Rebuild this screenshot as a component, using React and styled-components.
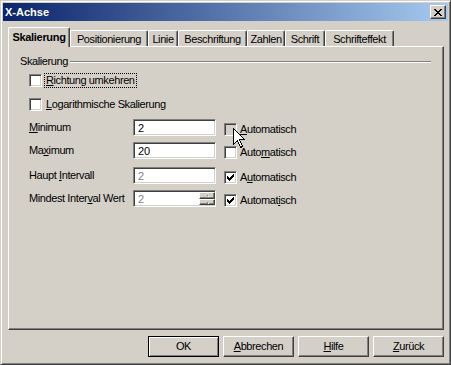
import React from 'react';
import styled, { createGlobalStyle, css } from 'styled-components';

const Global = createGlobalStyle`
  html, body { margin: 0; padding: 0; background: #d4d0c8; }
  body {
    font-family: "Liberation Sans", Arial, sans-serif;
    font-size: 11px;
    letter-spacing: -0.4px;
    color: #000;
  }
  u { text-decoration-thickness: 1px; text-underline-offset: 1px; }
`;

const raised = css`
  border-top: 1px solid #fff;
  border-left: 1px solid #fff;
  border-right: 1px solid #404040;
  border-bottom: 1px solid #404040;
  box-shadow: inset -1px -1px 0 #808080;
`;

const sunken = css`
  border-top: 1px solid #808080;
  border-left: 1px solid #808080;
  border-right: 1px solid #fff;
  border-bottom: 1px solid #fff;
  box-shadow: inset 1px 1px 0 #404040, inset -1px -1px 0 #d4d0c8;
`;

const Window = styled.div`
  position: relative;
  width: 451px;
  height: 365px;
  box-sizing: border-box;
  background: #d4d0c8;
  border-top: 1px solid #d4d0c8;
  border-left: 1px solid #d4d0c8;
  border-right: 1px solid #404040;
  border-bottom: 1px solid #404040;
  box-shadow: inset 1px 1px 0 #fff, inset -1px -1px 0 #808080;
  padding: 2px;
  display: flex;
  flex-direction: column;
  overflow: hidden;
`;

const TitleBar = styled.div`
  height: 18px;
  flex: none;
  background: linear-gradient(to right, #0a246a, #a6caf0);
  display: flex;
  align-items: center;
  justify-content: space-between;
  padding: 0 2px 0 2px;
`;

const Title = styled.span`
  color: #fff;
  font-weight: bold;
  letter-spacing: 0;
  line-height: 18px;
`;

const CloseButton = styled.div`
  width: 16px;
  height: 14px;
  box-sizing: border-box;
  background: #d4d0c8;
  ${raised};
  display: flex;
  align-items: center;
  justify-content: center;
`;

const Body = styled.div`
  padding: 6px 4px 0 5px;
  display: flex;
  flex-direction: column;
`;

const TabRow = styled.div`
  display: flex;
  align-items: flex-end;
  height: 19px;
  position: relative;
  z-index: 2;
`;

const Tab = styled.div`
  width: ${p => p.$w}px;
  height: ${p => (p.$active ? 20 : 16)}px;
  margin-bottom: ${p => (p.$active ? -1 : 0)}px;
  box-sizing: border-box;
  background: #d4d0c8;
  border-top: 1px solid #fff;
  border-left: 1px solid #fff;
  border-right: 1px solid #404040;
  border-radius: 2px 2px 0 0;
  box-shadow: inset -1px 0 0 #808080;
  display: flex;
  justify-content: center;
  padding-top: ${p => (p.$active ? 3 : 2)}px;
  line-height: 13px;
  font-weight: ${p => (p.$active ? 'bold' : 'normal')};
  letter-spacing: ${p => (p.$active ? '-0.3px' : '-0.4px')};
  white-space: nowrap;
`;

const Panel = styled.div`
  height: 284px;
  box-sizing: border-box;
  ${raised};
  padding: 8px 11px 0 11px;
  display: flex;
  flex-direction: column;
`;

const GroupHeader = styled.div`
  display: flex;
  align-items: center;
  gap: 2px;
  height: 13px;
  line-height: 13px;
`;

const GroupLine = styled.div`
  flex: 1;
  height: 0;
  border-top: 1px solid #808080;
  border-bottom: 1px solid #fff;
  margin-right: 1px;
`;

const CheckRow = styled.div`
  display: flex;
  align-items: center;
  gap: 3px;
  margin-left: 9px;
  margin-top: ${p => p.$mt}px;
  height: 13px;
  line-height: 13px;
`;

const Box = styled.div`
  width: 13px;
  height: 13px;
  box-sizing: border-box;
  flex: none;
  background: ${p => (p.$pressed ? '#d4d0c8' : '#fff')};
  ${sunken};
  display: flex;
  align-items: center;
  justify-content: center;
`;

const Label = styled.span`
  white-space: nowrap;
  padding: 0 1px;
  outline: ${p => (p.$focus ? '1px dotted #000' : 'none')};
  outline-offset: 0px;
`;

const Form = styled.div`
  margin-left: 9px;
  margin-top: 8px;
  display: flex;
  flex-direction: column;
`;

const FormRow = styled.div`
  display: grid;
  grid-template-columns: 96px 83px auto;
  column-gap: 8px;
  align-items: start;
  margin-top: ${p => p.$mt}px;
`;

const FieldLabel = styled.span`
  line-height: 17px;
  white-space: nowrap;
`;

const Field = styled.div`
  height: 17px;
  box-sizing: border-box;
  background: #fff;
  ${sunken};
  display: flex;
  align-items: stretch;
  padding: 2px 0 0 2px;
  color: ${p => (p.$disabled ? '#808080' : '#000')};
  line-height: 12px;
  letter-spacing: 0;
`;

const FieldText = styled.span`
  flex: 1;
  padding-left: 2px;
`;

const Spin = styled.div`
  width: 16px;
  margin: -1px 0 0 0;
  display: flex;
  flex-direction: column;
  height: 13px;
`;

const SpinButton = styled.div`
  flex: 1;
  box-sizing: border-box;
  background: #d4d0c8;
  ${raised};
  position: relative;
  &::after {
    content: '';
    position: absolute;
    left: 7px;
    top: 2px;
    width: 1px;
    height: 1px;
    background: #808080;
    box-shadow: 1px 1px 0 #fff;
  }
`;

const AutoCheck = styled.div`
  display: flex;
  align-items: center;
  gap: 3px;
  margin-top: 4px;
  line-height: 13px;
  white-space: nowrap;
`;

const ButtonBar = styled.div`
  display: flex;
  justify-content: flex-end;
  gap: 4px;
  margin-top: 6px;
`;

const Button = styled.div`
  width: 71px;
  height: 21px;
  box-sizing: border-box;
  background: #d4d0c8;
  display: flex;
  align-items: center;
  justify-content: center;
  line-height: 13px;
  ${p =>
    p.$default
      ? css`
          border: 1px solid #000;
          box-shadow: inset 1px 1px 0 #fff, inset -1px -1px 0 #808080;
        `
      : raised};
`;

const Cursor = styled.svg`
  position: absolute;
  left: 232px;
  top: 127px;
  z-index: 10;
`;

const checkPixels = [
  '......X',
  '.....XX',
  'X...XXX',
  'XX.XXX.',
  'XXXXX..',
  '.XXX...',
  '..X....',
];

const closePixels = [
  'XX....XX',
  '.XX..XX.',
  '..XXXX..',
  '...XX...',
  '..XXXX..',
  '.XX..XX.',
  'XX....XX',
];

const PixelIcon = ({ rows, color = '#000' }) => (
  <svg width={rows[0].length} height={rows.length} shapeRendering="crispEdges">
    {rows.flatMap((r, y) =>
      r.split('').map((c, x) =>
        c === 'X' ? <rect key={`${x}-${y}`} x={x} y={y} width="1" height="1" fill={color} /> : null
      )
    )}
  </svg>
);

const Checkbox = ({ checked, pressed }) => (
  <Box $pressed={pressed}>{checked && <PixelIcon rows={checkPixels} />}</Box>
);

const rows = [
  { label: <><u>M</u>inimum</>, value: '2', mt: 0, auto: <><u>A</u>utomatisch</>, checked: false, pressed: true },
  { label: <>Ma<u>x</u>imum</>, value: '20', mt: 6, auto: <>Auto<u>m</u>atisch</>, checked: false },
  { label: <>Haupt <u>I</u>ntervall</>, value: '2', mt: 8, auto: <>A<u>u</u>tomatisch</>, checked: true, disabled: true },
  { label: <>Mindest Inter<u>v</u>al Wert</>, value: '2', mt: 6, auto: <>Automat<u>i</u>sch</>, checked: true, disabled: true, spin: true },
];

const tabs = [
  { t: 'Skalierung', w: 62, active: true },
  { t: 'Positionierung', w: 78 },
  { t: 'Linie', w: 30 },
  { t: 'Beschriftung', w: 69 },
  { t: 'Zahlen', w: 38 },
  { t: 'Schrift', w: 40 },
  { t: 'Schrifteffekt', w: 69 },
];

export default function App() {
  return (
    <>
      <Global />
      <Window>
        <TitleBar>
          <Title>X-Achse</Title>
          <CloseButton>
            <PixelIcon rows={closePixels} />
          </CloseButton>
        </TitleBar>
        <Body>
          <TabRow>
            {tabs.map(tab => (
              <Tab key={tab.t} $w={tab.w} $active={tab.active}>
                {tab.t}
              </Tab>
            ))}
          </TabRow>
          <Panel>
            <GroupHeader>
              <span>Skalierung</span>
              <GroupLine />
            </GroupHeader>
            <CheckRow $mt={6}>
              <Checkbox />
              <Label $focus>
                <u>R</u>ichtung umkehren
              </Label>
            </CheckRow>
            <CheckRow $mt={11}>
              <Checkbox />
              <Label>
                <u>L</u>ogarithmische Skalierung
              </Label>
            </CheckRow>
            <Form>
              {rows.map((r, i) => (
                <FormRow key={i} $mt={r.mt}>
                  <FieldLabel>{r.label}</FieldLabel>
                  <Field $disabled={r.disabled}>
                    <FieldText>{r.value}</FieldText>
                    {r.spin && (
                      <Spin>
                        <SpinButton />
                        <SpinButton />
                      </Spin>
                    )}
                  </Field>
                  <AutoCheck>
                    <Checkbox checked={r.checked} pressed={r.pressed} />
                    <span>{r.auto}</span>
                  </AutoCheck>
                </FormRow>
              ))}
            </Form>
          </Panel>
          <ButtonBar>
            <Button $default>OK</Button>
            <Button>
              <span><u>A</u>bbrechen</span>
            </Button>
            <Button>
              <span><u>H</u>ilfe</span>
            </Button>
            <Button>
              <span><u>Z</u>urück</span>
            </Button>
          </ButtonBar>
        </Body>
        <Cursor width="13" height="21" viewBox="0 0 13 21" shapeRendering="crispEdges">
          <path
            d="M0.5 0.5 L0.5 16.5 L4.5 12.5 L7.5 19.5 L9.5 18.5 L6.5 11.5 L11.5 11.5 Z"
            fill="#fff"
            stroke="#000"
            strokeWidth="1"
          />
        </Cursor>
      </Window>
    </>
  );
}
